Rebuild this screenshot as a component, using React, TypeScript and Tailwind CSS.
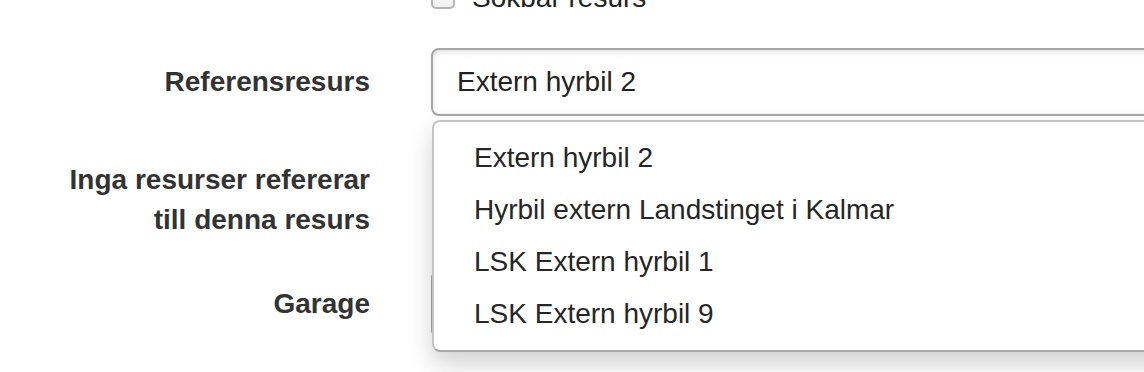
const options = [
  "Extern hyrbil 2",
  "Hyrbil extern Landstinget i Kalmar",
  "LSK Extern hyrbil 1",
  "LSK Extern hyrbil 9",
];

function Field({ children }: { children?: React.ReactNode }) {
  return (
    <div className="h-[68px] w-[900px] rounded-lg border-2 border-[#a6a6a6] bg-white px-6 py-[12px] text-[#222] shadow-[inset_0_2px_6px_rgba(0,0,0,0.12)]">
      {children}
    </div>
  );
}

export default function App() {
  return (
    <div className="h-[372px] w-[1144px] overflow-hidden bg-white font-['Liberation_Sans',Arial,sans-serif] text-[28px] leading-[40px] text-[#333]">
      <div className="-mt-[22px] flex flex-col gap-[30px]">
        <div className="ml-[431px] flex h-10 items-center gap-[17px]">
          <span className="-mt-[2px] block h-[24px] w-[24px] rounded-[5px] border-2 border-[#b5b5b5] bg-gradient-to-b from-white to-[#f0f0f0]" />
          <span className="text-[#222]">Sökbar resurs</span>
        </div>

        <div className="grid grid-cols-[370px_1fr] gap-x-[61px]">
          <label className="pt-[14px] text-right font-bold">Referensresurs</label>
          <div className="relative z-10">
            <Field>Extern hyrbil 2</Field>
            <ul className="absolute left-[1px] top-[72px] w-[900px] rounded-lg border-2 border-[#c4c4c4] border-b-[#a8a8a8] bg-white py-[10px] shadow-[0_12px_24px_rgba(0,0,0,0.18)]">
              {options.map((o) => (
                <li key={o} className="px-10 py-[6px] text-[#262626]">
                  {o}
                </li>
              ))}
            </ul>
          </div>
        </div>

        <div className="grid grid-cols-[370px_1fr] gap-x-[61px]">
          <label className="pt-[14px] text-right font-bold">
            Inga resurser refererar
            <br />
            till denna resurs
          </label>
          <div />
        </div>

        <div className="grid grid-cols-[370px_1fr] gap-x-[61px]">
          <label className="pt-[14px] text-right font-bold">Garage</label>
          <Field />
        </div>
      </div>
    </div>
  );
}
